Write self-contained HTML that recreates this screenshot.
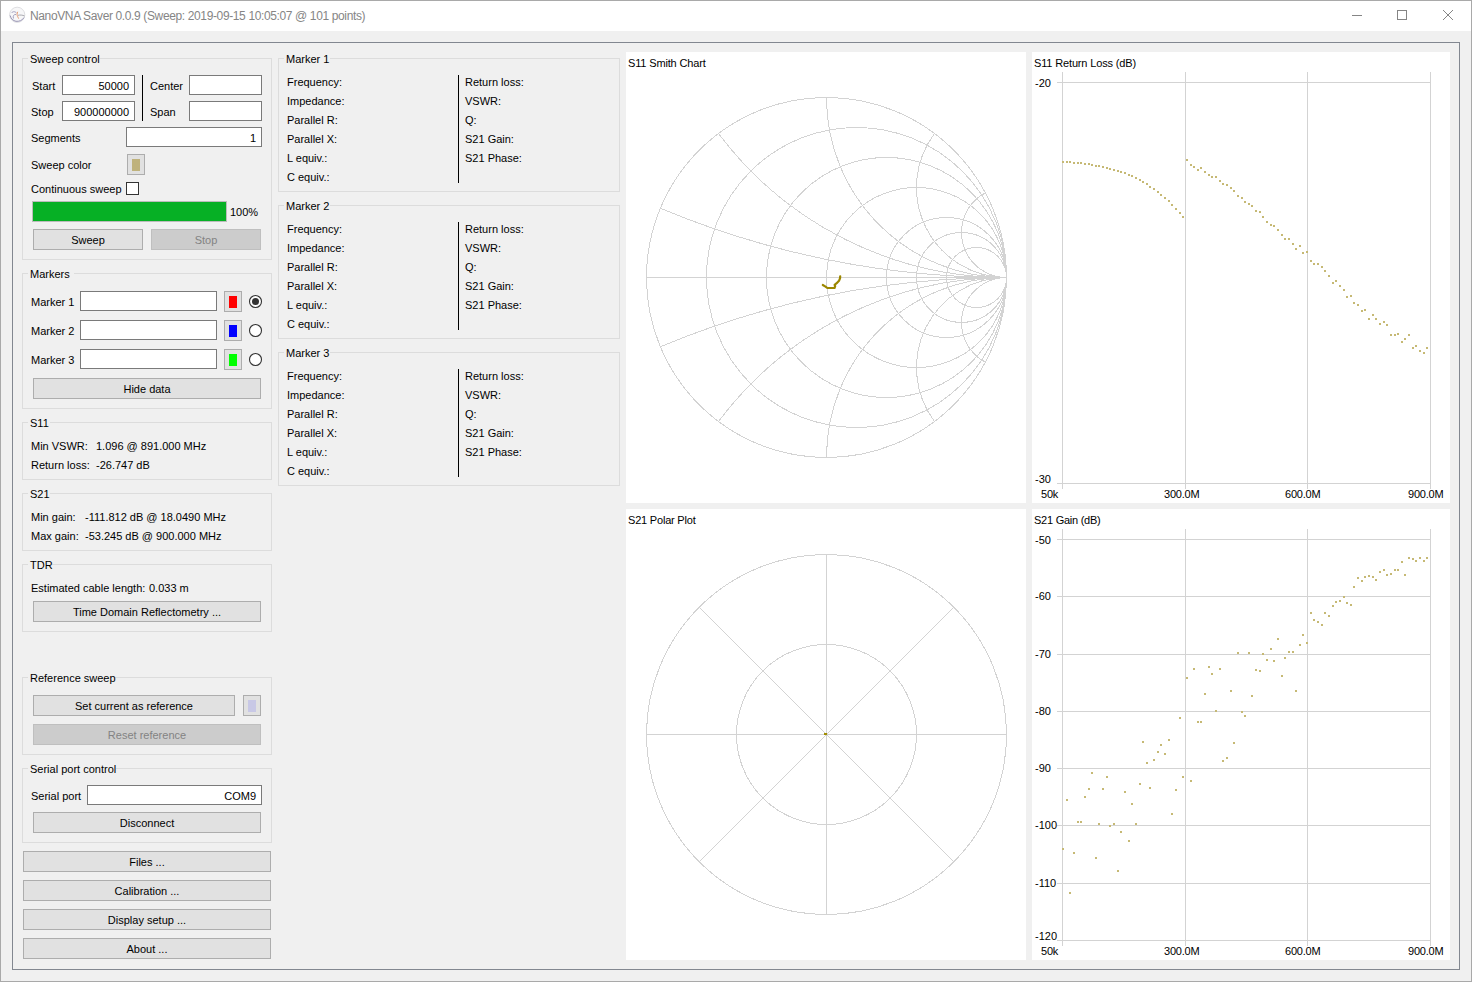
<!DOCTYPE html><html><head><meta charset="utf-8"><style>
html,body{margin:0;padding:0;}
body{width:1472px;height:982px;overflow:hidden;position:relative;background:#f0f0f0;font-family:"Liberation Sans", sans-serif;font-size:11px;}
.t{position:absolute;white-space:pre;line-height:12px;font-family:"Liberation Sans", sans-serif;}
.r{position:absolute;box-sizing:content-box;}
svg{position:absolute;}
</style></head><body>
<div class="r" style="left:0px;top:0px;width:1470px;height:980px;border:1px solid #a9a9a9;"></div>
<div class="r" style="left:1px;top:1px;width:1470px;height:30px;background:#fff;"></div>
<div class="t" style="left:30px;top:10px;color:#858585;font-size:12px;letter-spacing:-0.37px">NanoVNA Saver 0.0.9 (Sweep: 2019-09-15 10:05:07 @ 101 points)</div>
<svg style="left:6px;top:4px" width="22" height="22" viewBox="0 0 22 22">
<circle cx="17.2" cy="14.8" r="7.6" transform="translate(-6,-4)" fill="#f7f7f8" stroke="#dadade" stroke-width="0.9"/>
<g transform="translate(-6,-4)" fill="none" stroke-width="0.9">
<path d="M10.2 15.5 C10.8 18.5,13 20.8,16 21.3 C19 21.6,22.5 20.5,24 17.5" stroke="#8f8aae"/>
<path d="M11.5 13 C13 11,15.5 11.5,16.6 13.2 M13.5 18.5 C12.5 16,14 14,16 14.5" stroke="#9b97b8"/>
<path d="M18 15.3 C20 14.8,22.5 15,24.6 16" stroke="#a0a0a8"/>
<path d="M17.7 11.8 C16.8 13.5,16.9 15,17.6 16.4 C18 17.3,18.4 18,18.6 18.6" stroke="#e59a70" stroke-width="1"/>
</g>
</svg>
<div class="r" style="left:1352px;top:15px;width:10px;height:1px;background:#858585;"></div>
<div class="r" style="left:1397px;top:10px;width:8px;height:8px;border:1px solid #858585;"></div>
<svg style="left:1442px;top:9px" width="12" height="12" viewBox="0 0 12 12"><path d="M1 1 L11 11 M11 1 L1 11" stroke="#858585" stroke-width="1"/></svg>
<div class="r" style="left:12px;top:42px;width:1446px;height:926px;border:1px solid #828790;"></div>
<div class="r" style="left:22px;top:58px;width:248px;height:200px;border:1px solid #dcdcdc;"></div>
<div class="r" style="left:28px;top:52px;width:72px;height:12px;background:#f0f0f0;"></div>
<div class="t" style="left:30px;top:53px;color:#000;font-size:11px;">Sweep control</div>
<div class="t" style="left:32px;top:80px;color:#000;font-size:11px;">Start</div>
<div class="r" style="left:62px;top:75px;width:71px;height:18px;border:1px solid #7a7a7a;background:#fff;"></div>
<div class="t" style="right:1343px;top:80px;color:#000;font-size:11px">50000</div>
<div class="t" style="left:31px;top:106px;color:#000;font-size:11px;">Stop</div>
<div class="r" style="left:62px;top:101px;width:71px;height:18px;border:1px solid #7a7a7a;background:#fff;"></div>
<div class="t" style="right:1343px;top:106px;color:#000;font-size:11px">900000000</div>
<div class="r" style="left:142px;top:75px;width:1px;height:46px;background:#000;"></div>
<div class="t" style="left:150px;top:80px;color:#000;font-size:11px;">Center</div>
<div class="r" style="left:189px;top:75px;width:71px;height:18px;border:1px solid #7a7a7a;background:#fff;"></div>
<div class="t" style="left:150px;top:106px;color:#000;font-size:11px;">Span</div>
<div class="r" style="left:189px;top:101px;width:71px;height:18px;border:1px solid #7a7a7a;background:#fff;"></div>
<div class="t" style="left:31px;top:132px;color:#000;font-size:11px;">Segments</div>
<div class="r" style="left:126px;top:127px;width:134px;height:18px;border:1px solid #7a7a7a;background:#fff;"></div>
<div class="t" style="right:1216px;top:132px;color:#000;font-size:11px">1</div>
<div class="t" style="left:31px;top:159px;color:#000;font-size:11px;">Sweep color</div>
<div class="r" style="left:127px;top:154px;width:16px;height:19px;border:1px solid #adadad;background:#e1e1e1;"></div>
<div class="r" style="left:132px;top:159px;width:8px;height:12px;background:#bfb27c;"></div>
<div class="t" style="left:31px;top:183px;color:#000;font-size:11px;">Continuous sweep</div>
<div class="r" style="left:126px;top:182px;width:11px;height:11px;border:1px solid #333333;background:#fff;"></div>
<div class="r" style="left:32px;top:201px;width:193px;height:19px;border:1px solid #bcbcbc;background:#06b025;"></div>
<div class="t" style="left:230px;top:206px;color:#000;font-size:11px;">100%</div>
<div class="r" style="left:33px;top:229px;width:108px;height:19px;border:1px solid #adadad;background:#e1e1e1;"></div>
<div class="t" style="left:33px;width:110px;text-align:center;top:234px;color:#000;font-size:11px">Sweep</div>
<div class="r" style="left:151px;top:229px;width:108px;height:19px;border:1px solid #bfbfbf;background:#cccccc;"></div>
<div class="t" style="left:151px;width:110px;text-align:center;top:234px;color:#838383;font-size:11px">Stop</div>
<div class="r" style="left:22px;top:273px;width:248px;height:134px;border:1px solid #dcdcdc;"></div>
<div class="r" style="left:28px;top:267px;width:46px;height:12px;background:#f0f0f0;"></div>
<div class="t" style="left:30px;top:268px;color:#000;font-size:11px;">Markers</div>
<div class="t" style="left:31px;top:296px;color:#000;font-size:11px;">Marker 1</div>
<div class="r" style="left:80px;top:291px;width:135px;height:18px;border:1px solid #7a7a7a;background:#fff;"></div>
<div class="r" style="left:224px;top:291px;width:16px;height:19px;border:1px solid #adadad;background:#e1e1e1;"></div>
<div class="r" style="left:229px;top:296px;width:8px;height:12px;background:#ff0000;"></div>
<svg style="left:248px;top:294px" width="15" height="15" viewBox="0 0 15 15"><circle cx="7.5" cy="7.5" r="6" fill="#fff" stroke="#333" stroke-width="1.1"/><circle cx="7.5" cy="7.5" r="3.5" fill="#333"/></svg>
<div class="t" style="left:31px;top:325px;color:#000;font-size:11px;">Marker 2</div>
<div class="r" style="left:80px;top:320px;width:135px;height:18px;border:1px solid #7a7a7a;background:#fff;"></div>
<div class="r" style="left:224px;top:320px;width:16px;height:19px;border:1px solid #adadad;background:#e1e1e1;"></div>
<div class="r" style="left:229px;top:325px;width:8px;height:12px;background:#0000ff;"></div>
<svg style="left:248px;top:323px" width="15" height="15" viewBox="0 0 15 15"><circle cx="7.5" cy="7.5" r="6" fill="#fff" stroke="#333" stroke-width="1.1"/></svg>
<div class="t" style="left:31px;top:354px;color:#000;font-size:11px;">Marker 3</div>
<div class="r" style="left:80px;top:349px;width:135px;height:18px;border:1px solid #7a7a7a;background:#fff;"></div>
<div class="r" style="left:224px;top:349px;width:16px;height:19px;border:1px solid #adadad;background:#e1e1e1;"></div>
<div class="r" style="left:229px;top:354px;width:8px;height:12px;background:#00ff00;"></div>
<svg style="left:248px;top:352px" width="15" height="15" viewBox="0 0 15 15"><circle cx="7.5" cy="7.5" r="6" fill="#fff" stroke="#333" stroke-width="1.1"/></svg>
<div class="r" style="left:33px;top:378px;width:226px;height:19px;border:1px solid #adadad;background:#e1e1e1;"></div>
<div class="t" style="left:33px;width:228px;text-align:center;top:383px;color:#000;font-size:11px">Hide data</div>
<div class="r" style="left:22px;top:422px;width:248px;height:56px;border:1px solid #dcdcdc;"></div>
<div class="r" style="left:28px;top:416px;width:22px;height:12px;background:#f0f0f0;"></div>
<div class="t" style="left:30px;top:417px;color:#000;font-size:11px;">S11</div>
<div class="t" style="left:31px;top:440px;color:#000;font-size:11px;">Min VSWR:</div>
<div class="t" style="left:96px;top:440px;color:#000;font-size:11px;">1.096 @ 891.000 MHz</div>
<div class="t" style="left:31px;top:459px;color:#000;font-size:11px;">Return loss:</div>
<div class="t" style="left:96px;top:459px;color:#000;font-size:11px;">-26.747 dB</div>
<div class="r" style="left:22px;top:493px;width:248px;height:56px;border:1px solid #dcdcdc;"></div>
<div class="r" style="left:28px;top:487px;width:22px;height:12px;background:#f0f0f0;"></div>
<div class="t" style="left:30px;top:488px;color:#000;font-size:11px;">S21</div>
<div class="t" style="left:31px;top:511px;color:#000;font-size:11px;">Min gain:</div>
<div class="t" style="left:85px;top:511px;color:#000;font-size:11px;">-111.812 dB @ 18.0490 MHz</div>
<div class="t" style="left:31px;top:530px;color:#000;font-size:11px;">Max gain:</div>
<div class="t" style="left:85px;top:530px;color:#000;font-size:11px;">-53.245 dB @ 900.000 MHz</div>
<div class="r" style="left:22px;top:564px;width:248px;height:66px;border:1px solid #dcdcdc;"></div>
<div class="r" style="left:28px;top:558px;width:24px;height:12px;background:#f0f0f0;"></div>
<div class="t" style="left:30px;top:559px;color:#000;font-size:11px;">TDR</div>
<div class="t" style="left:31px;top:582px;color:#000;font-size:11px;">Estimated cable length:</div>
<div class="t" style="left:149px;top:582px;color:#000;font-size:11px;">0.033 m</div>
<div class="r" style="left:33px;top:601px;width:226px;height:19px;border:1px solid #adadad;background:#e1e1e1;"></div>
<div class="t" style="left:33px;width:228px;text-align:center;top:606px;color:#000;font-size:11px">Time Domain Reflectometry ...</div>
<div class="r" style="left:22px;top:677px;width:248px;height:76px;border:1px solid #dcdcdc;"></div>
<div class="r" style="left:28px;top:671px;width:86px;height:12px;background:#f0f0f0;"></div>
<div class="t" style="left:30px;top:672px;color:#000;font-size:11px;">Reference sweep</div>
<div class="r" style="left:33px;top:695px;width:200px;height:19px;border:1px solid #adadad;background:#e1e1e1;"></div>
<div class="t" style="left:33px;width:202px;text-align:center;top:700px;color:#000;font-size:11px">Set current as reference</div>
<div class="r" style="left:243px;top:695px;width:16px;height:19px;border:1px solid #adadad;background:#e1e1e1;"></div>
<div class="r" style="left:248px;top:700px;width:8px;height:12px;background:#c8c8e6;"></div>
<div class="r" style="left:33px;top:724px;width:226px;height:19px;border:1px solid #bfbfbf;background:#cccccc;"></div>
<div class="t" style="left:33px;width:228px;text-align:center;top:729px;color:#838383;font-size:11px">Reset reference</div>
<div class="r" style="left:22px;top:768px;width:248px;height:73px;border:1px solid #dcdcdc;"></div>
<div class="r" style="left:28px;top:762px;width:88px;height:12px;background:#f0f0f0;"></div>
<div class="t" style="left:30px;top:763px;color:#000;font-size:11px;">Serial port control</div>
<div class="t" style="left:31px;top:790px;color:#000;font-size:11px;">Serial port</div>
<div class="r" style="left:87px;top:785px;width:173px;height:18px;border:1px solid #7a7a7a;background:#fff;"></div>
<div class="t" style="right:1216px;top:790px;color:#000;font-size:11px">COM9</div>
<div class="r" style="left:33px;top:812px;width:226px;height:19px;border:1px solid #adadad;background:#e1e1e1;"></div>
<div class="t" style="left:33px;width:228px;text-align:center;top:817px;color:#000;font-size:11px">Disconnect</div>
<div class="r" style="left:23px;top:851px;width:246px;height:19px;border:1px solid #adadad;background:#e1e1e1;"></div>
<div class="t" style="left:23px;width:248px;text-align:center;top:856px;color:#000;font-size:11px">Files ...</div>
<div class="r" style="left:23px;top:880px;width:246px;height:19px;border:1px solid #adadad;background:#e1e1e1;"></div>
<div class="t" style="left:23px;width:248px;text-align:center;top:885px;color:#000;font-size:11px">Calibration ...</div>
<div class="r" style="left:23px;top:909px;width:246px;height:19px;border:1px solid #adadad;background:#e1e1e1;"></div>
<div class="t" style="left:23px;width:248px;text-align:center;top:914px;color:#000;font-size:11px">Display setup ...</div>
<div class="r" style="left:23px;top:938px;width:246px;height:19px;border:1px solid #adadad;background:#e1e1e1;"></div>
<div class="t" style="left:23px;width:248px;text-align:center;top:943px;color:#000;font-size:11px">About ...</div>
<div class="r" style="left:278px;top:58px;width:340px;height:132px;border:1px solid #dcdcdc;"></div>
<div class="r" style="left:284px;top:52px;width:46px;height:12px;background:#f0f0f0;"></div>
<div class="t" style="left:286px;top:53px;color:#000;font-size:11px;">Marker 1</div>
<div class="t" style="left:287px;top:76px;color:#000;font-size:11px;">Frequency:</div>
<div class="t" style="left:287px;top:95px;color:#000;font-size:11px;">Impedance:</div>
<div class="t" style="left:287px;top:114px;color:#000;font-size:11px;">Parallel R:</div>
<div class="t" style="left:287px;top:133px;color:#000;font-size:11px;">Parallel X:</div>
<div class="t" style="left:287px;top:152px;color:#000;font-size:11px;">L equiv.:</div>
<div class="t" style="left:287px;top:171px;color:#000;font-size:11px;">C equiv.:</div>
<div class="t" style="left:465px;top:76px;color:#000;font-size:11px;">Return loss:</div>
<div class="t" style="left:465px;top:95px;color:#000;font-size:11px;">VSWR:</div>
<div class="t" style="left:465px;top:114px;color:#000;font-size:11px;">Q:</div>
<div class="t" style="left:465px;top:133px;color:#000;font-size:11px;">S21 Gain:</div>
<div class="t" style="left:465px;top:152px;color:#000;font-size:11px;">S21 Phase:</div>
<div class="r" style="left:458px;top:75px;width:1px;height:108px;background:#000;"></div>
<div class="r" style="left:278px;top:205px;width:340px;height:132px;border:1px solid #dcdcdc;"></div>
<div class="r" style="left:284px;top:199px;width:46px;height:12px;background:#f0f0f0;"></div>
<div class="t" style="left:286px;top:200px;color:#000;font-size:11px;">Marker 2</div>
<div class="t" style="left:287px;top:223px;color:#000;font-size:11px;">Frequency:</div>
<div class="t" style="left:287px;top:242px;color:#000;font-size:11px;">Impedance:</div>
<div class="t" style="left:287px;top:261px;color:#000;font-size:11px;">Parallel R:</div>
<div class="t" style="left:287px;top:280px;color:#000;font-size:11px;">Parallel X:</div>
<div class="t" style="left:287px;top:299px;color:#000;font-size:11px;">L equiv.:</div>
<div class="t" style="left:287px;top:318px;color:#000;font-size:11px;">C equiv.:</div>
<div class="t" style="left:465px;top:223px;color:#000;font-size:11px;">Return loss:</div>
<div class="t" style="left:465px;top:242px;color:#000;font-size:11px;">VSWR:</div>
<div class="t" style="left:465px;top:261px;color:#000;font-size:11px;">Q:</div>
<div class="t" style="left:465px;top:280px;color:#000;font-size:11px;">S21 Gain:</div>
<div class="t" style="left:465px;top:299px;color:#000;font-size:11px;">S21 Phase:</div>
<div class="r" style="left:458px;top:222px;width:1px;height:108px;background:#000;"></div>
<div class="r" style="left:278px;top:352px;width:340px;height:132px;border:1px solid #dcdcdc;"></div>
<div class="r" style="left:284px;top:346px;width:46px;height:12px;background:#f0f0f0;"></div>
<div class="t" style="left:286px;top:347px;color:#000;font-size:11px;">Marker 3</div>
<div class="t" style="left:287px;top:370px;color:#000;font-size:11px;">Frequency:</div>
<div class="t" style="left:287px;top:389px;color:#000;font-size:11px;">Impedance:</div>
<div class="t" style="left:287px;top:408px;color:#000;font-size:11px;">Parallel R:</div>
<div class="t" style="left:287px;top:427px;color:#000;font-size:11px;">Parallel X:</div>
<div class="t" style="left:287px;top:446px;color:#000;font-size:11px;">L equiv.:</div>
<div class="t" style="left:287px;top:465px;color:#000;font-size:11px;">C equiv.:</div>
<div class="t" style="left:465px;top:370px;color:#000;font-size:11px;">Return loss:</div>
<div class="t" style="left:465px;top:389px;color:#000;font-size:11px;">VSWR:</div>
<div class="t" style="left:465px;top:408px;color:#000;font-size:11px;">Q:</div>
<div class="t" style="left:465px;top:427px;color:#000;font-size:11px;">S21 Gain:</div>
<div class="t" style="left:465px;top:446px;color:#000;font-size:11px;">S21 Phase:</div>
<div class="r" style="left:458px;top:369px;width:1px;height:108px;background:#000;"></div>
<div class="r" style="left:626px;top:52px;width:400px;height:451px;background:#fff;"></div>
<div class="r" style="left:1032px;top:52px;width:418px;height:451px;background:#fff;"></div>
<div class="r" style="left:626px;top:509px;width:400px;height:451px;background:#fff;"></div>
<div class="r" style="left:1032px;top:509px;width:418px;height:451px;background:#fff;"></div>
<div class="t" style="left:628px;top:57px;color:#000;font-size:11px;letter-spacing:-0.15px;">S11 Smith Chart</div>
<div class="t" style="left:1034px;top:57px;color:#000;font-size:11px;letter-spacing:-0.15px;">S11 Return Loss (dB)</div>
<div class="t" style="left:628px;top:514px;color:#000;font-size:11px;letter-spacing:-0.2px;">S21 Polar Plot</div>
<div class="t" style="left:1034px;top:514px;color:#000;font-size:11px;letter-spacing:-0.25px;">S21 Gain (dB)</div>
<svg style="left:0;top:0" width="1472" height="982"><g fill="none" stroke="#d3d3d3" stroke-width="1" shape-rendering="crispEdges"><circle cx="826.5" cy="277.5" r="180"/><line x1="646.5" y1="277.5" x2="1006.5" y2="277.5"/><circle cx="856.50" cy="277.5" r="150.00"/><circle cx="886.50" cy="277.5" r="120.00"/><circle cx="916.50" cy="277.5" r="90.00"/><circle cx="946.50" cy="277.5" r="60.00"/><circle cx="961.50" cy="277.5" r="45.00"/><circle cx="976.50" cy="277.5" r="30.00"/><path d="M1006.5 277.5 A900.00 900.00 0 0 1 660.35 208.27"/><path d="M1006.5 277.5 A900.00 900.00 0 0 0 660.35 346.73"/><path d="M1006.5 277.5 A360.00 360.00 0 0 1 718.50 133.50"/><path d="M1006.5 277.5 A360.00 360.00 0 0 0 718.50 421.50"/><path d="M1006.5 277.5 A180.00 180.00 0 0 1 826.50 97.50"/><path d="M1006.5 277.5 A180.00 180.00 0 0 0 826.50 457.50"/><path d="M1006.5 277.5 A90.00 90.00 0 0 1 934.50 133.50"/><path d="M1006.5 277.5 A90.00 90.00 0 0 0 934.50 421.50"/><path d="M1006.5 277.5 A45.00 45.00 0 0 1 985.32 192.79"/><path d="M1006.5 277.5 A45.00 45.00 0 0 0 985.32 362.21"/></g><path d="M822.8 285 L825.5 286.6 L827.3 288 L834.5 288 L835.2 286.2 L834.6 284.8 L836.7 283.2 L839 280.8 L840 278.3 L840.2 276.4" fill="none" stroke="#9c8700" stroke-width="2.2" stroke-linejoin="round" stroke-linecap="round"/><g fill="none" stroke="#d3d3d3" stroke-width="1" shape-rendering="crispEdges"><circle cx="826.5" cy="734.5" r="180"/><circle cx="826.5" cy="734.5" r="90"/><line x1="646.5" y1="734.5" x2="1006.5" y2="734.5"/><line x1="826.5" y1="554.5" x2="826.5" y2="914.5"/><line x1="699.22" y1="607.22" x2="953.78" y2="861.78"/><line x1="699.22" y1="861.78" x2="953.78" y2="607.22"/></g><rect x="824" y="733" width="3" height="2" fill="#a08c00"/><g fill="#d3d3d3" shape-rendering="crispEdges"><rect x="1062" y="72" width="1" height="417"/><rect x="1185" y="72" width="1" height="417"/><rect x="1307" y="72" width="1" height="417"/><rect x="1430" y="72" width="1" height="417"/><rect x="1057" y="82" width="374" height="1"/><rect x="1057" y="483" width="374" height="1"/><rect x="1062" y="529" width="1" height="417"/><rect x="1185" y="529" width="1" height="417"/><rect x="1307" y="529" width="1" height="417"/><rect x="1430" y="529" width="1" height="417"/><rect x="1057" y="539" width="374" height="1"/><rect x="1057" y="596" width="374" height="1"/><rect x="1057" y="654" width="374" height="1"/><rect x="1057" y="711" width="374" height="1"/><rect x="1057" y="768" width="374" height="1"/><rect x="1057" y="825" width="374" height="1"/><rect x="1057" y="883" width="374" height="1"/><rect x="1057" y="940" width="374" height="1"/></g><g fill="#c6b975" shape-rendering="crispEdges"><rect x="1062" y="161" width="2" height="2"/><rect x="1062" y="848" width="2" height="2"/><rect x="1066" y="161" width="2" height="2"/><rect x="1066" y="799" width="2" height="2"/><rect x="1069" y="161" width="2" height="2"/><rect x="1069" y="892" width="2" height="2"/><rect x="1073" y="162" width="2" height="2"/><rect x="1073" y="852" width="2" height="2"/><rect x="1077" y="162" width="2" height="2"/><rect x="1077" y="821" width="2" height="2"/><rect x="1080" y="162" width="2" height="2"/><rect x="1080" y="821" width="2" height="2"/><rect x="1084" y="163" width="2" height="2"/><rect x="1084" y="796" width="2" height="2"/><rect x="1088" y="163" width="2" height="2"/><rect x="1088" y="788" width="2" height="2"/><rect x="1091" y="164" width="2" height="2"/><rect x="1091" y="772" width="2" height="2"/><rect x="1095" y="165" width="2" height="2"/><rect x="1095" y="857" width="2" height="2"/><rect x="1098" y="165" width="2" height="2"/><rect x="1098" y="823" width="2" height="2"/><rect x="1102" y="166" width="2" height="2"/><rect x="1102" y="788" width="2" height="2"/><rect x="1106" y="167" width="2" height="2"/><rect x="1106" y="776" width="2" height="2"/><rect x="1109" y="168" width="2" height="2"/><rect x="1109" y="825" width="2" height="2"/><rect x="1113" y="169" width="2" height="2"/><rect x="1113" y="823" width="2" height="2"/><rect x="1117" y="170" width="2" height="2"/><rect x="1117" y="870" width="2" height="2"/><rect x="1120" y="171" width="2" height="2"/><rect x="1120" y="831" width="2" height="2"/><rect x="1124" y="172" width="2" height="2"/><rect x="1124" y="791" width="2" height="2"/><rect x="1128" y="174" width="2" height="2"/><rect x="1128" y="840" width="2" height="2"/><rect x="1131" y="175" width="2" height="2"/><rect x="1131" y="803" width="2" height="2"/><rect x="1135" y="177" width="2" height="2"/><rect x="1135" y="823" width="2" height="2"/><rect x="1139" y="179" width="2" height="2"/><rect x="1139" y="783" width="2" height="2"/><rect x="1142" y="181" width="2" height="2"/><rect x="1142" y="741" width="2" height="2"/><rect x="1146" y="183" width="2" height="2"/><rect x="1146" y="762" width="2" height="2"/><rect x="1149" y="186" width="2" height="2"/><rect x="1149" y="787" width="2" height="2"/><rect x="1153" y="188" width="2" height="2"/><rect x="1153" y="759" width="2" height="2"/><rect x="1157" y="191" width="2" height="2"/><rect x="1157" y="751" width="2" height="2"/><rect x="1160" y="194" width="2" height="2"/><rect x="1160" y="744" width="2" height="2"/><rect x="1164" y="197" width="2" height="2"/><rect x="1164" y="753" width="2" height="2"/><rect x="1168" y="200" width="2" height="2"/><rect x="1168" y="739" width="2" height="2"/><rect x="1171" y="204" width="2" height="2"/><rect x="1171" y="813" width="2" height="2"/><rect x="1175" y="208" width="2" height="2"/><rect x="1175" y="789" width="2" height="2"/><rect x="1179" y="212" width="2" height="2"/><rect x="1179" y="717" width="2" height="2"/><rect x="1182" y="216" width="2" height="2"/><rect x="1182" y="776" width="2" height="2"/><rect x="1186" y="159" width="2" height="2"/><rect x="1186" y="677" width="2" height="2"/><rect x="1190" y="164" width="2" height="2"/><rect x="1190" y="780" width="2" height="2"/><rect x="1193" y="166" width="2" height="2"/><rect x="1193" y="668" width="2" height="2"/><rect x="1197" y="169" width="2" height="2"/><rect x="1197" y="721" width="2" height="2"/><rect x="1200" y="167" width="2" height="2"/><rect x="1200" y="721" width="2" height="2"/><rect x="1204" y="171" width="2" height="2"/><rect x="1204" y="693" width="2" height="2"/><rect x="1208" y="174" width="2" height="2"/><rect x="1208" y="666" width="2" height="2"/><rect x="1211" y="176" width="2" height="2"/><rect x="1211" y="673" width="2" height="2"/><rect x="1215" y="176" width="2" height="2"/><rect x="1215" y="710" width="2" height="2"/><rect x="1219" y="180" width="2" height="2"/><rect x="1219" y="668" width="2" height="2"/><rect x="1222" y="183" width="2" height="2"/><rect x="1222" y="760" width="2" height="2"/><rect x="1226" y="184" width="2" height="2"/><rect x="1226" y="757" width="2" height="2"/><rect x="1230" y="187" width="2" height="2"/><rect x="1230" y="690" width="2" height="2"/><rect x="1233" y="190" width="2" height="2"/><rect x="1233" y="742" width="2" height="2"/><rect x="1237" y="195" width="2" height="2"/><rect x="1237" y="652" width="2" height="2"/><rect x="1241" y="197" width="2" height="2"/><rect x="1241" y="711" width="2" height="2"/><rect x="1244" y="201" width="2" height="2"/><rect x="1244" y="715" width="2" height="2"/><rect x="1248" y="203" width="2" height="2"/><rect x="1248" y="652" width="2" height="2"/><rect x="1251" y="205" width="2" height="2"/><rect x="1251" y="695" width="2" height="2"/><rect x="1255" y="210" width="2" height="2"/><rect x="1255" y="669" width="2" height="2"/><rect x="1259" y="211" width="2" height="2"/><rect x="1259" y="670" width="2" height="2"/><rect x="1262" y="216" width="2" height="2"/><rect x="1262" y="653" width="2" height="2"/><rect x="1266" y="221" width="2" height="2"/><rect x="1266" y="659" width="2" height="2"/><rect x="1270" y="224" width="2" height="2"/><rect x="1270" y="648" width="2" height="2"/><rect x="1273" y="225" width="2" height="2"/><rect x="1273" y="660" width="2" height="2"/><rect x="1277" y="229" width="2" height="2"/><rect x="1277" y="638" width="2" height="2"/><rect x="1281" y="234" width="2" height="2"/><rect x="1281" y="675" width="2" height="2"/><rect x="1284" y="238" width="2" height="2"/><rect x="1284" y="657" width="2" height="2"/><rect x="1288" y="238" width="2" height="2"/><rect x="1288" y="651" width="2" height="2"/><rect x="1292" y="243" width="2" height="2"/><rect x="1292" y="651" width="2" height="2"/><rect x="1295" y="248" width="2" height="2"/><rect x="1295" y="690" width="2" height="2"/><rect x="1299" y="245" width="2" height="2"/><rect x="1299" y="644" width="2" height="2"/><rect x="1302" y="252" width="2" height="2"/><rect x="1302" y="634" width="2" height="2"/><rect x="1306" y="251" width="2" height="2"/><rect x="1306" y="642" width="2" height="2"/><rect x="1310" y="260" width="2" height="2"/><rect x="1310" y="612" width="2" height="2"/><rect x="1313" y="263" width="2" height="2"/><rect x="1313" y="619" width="2" height="2"/><rect x="1317" y="263" width="2" height="2"/><rect x="1317" y="621" width="2" height="2"/><rect x="1321" y="266" width="2" height="2"/><rect x="1321" y="624" width="2" height="2"/><rect x="1324" y="270" width="2" height="2"/><rect x="1324" y="612" width="2" height="2"/><rect x="1328" y="275" width="2" height="2"/><rect x="1328" y="615" width="2" height="2"/><rect x="1332" y="282" width="2" height="2"/><rect x="1332" y="605" width="2" height="2"/><rect x="1335" y="280" width="2" height="2"/><rect x="1335" y="601" width="2" height="2"/><rect x="1339" y="285" width="2" height="2"/><rect x="1339" y="600" width="2" height="2"/><rect x="1343" y="289" width="2" height="2"/><rect x="1343" y="596" width="2" height="2"/><rect x="1346" y="296" width="2" height="2"/><rect x="1346" y="602" width="2" height="2"/><rect x="1350" y="295" width="2" height="2"/><rect x="1350" y="604" width="2" height="2"/><rect x="1353" y="302" width="2" height="2"/><rect x="1353" y="586" width="2" height="2"/><rect x="1357" y="304" width="2" height="2"/><rect x="1357" y="577" width="2" height="2"/><rect x="1361" y="310" width="2" height="2"/><rect x="1361" y="580" width="2" height="2"/><rect x="1364" y="309" width="2" height="2"/><rect x="1364" y="576" width="2" height="2"/><rect x="1368" y="318" width="2" height="2"/><rect x="1368" y="575" width="2" height="2"/><rect x="1372" y="314" width="2" height="2"/><rect x="1372" y="576" width="2" height="2"/><rect x="1375" y="318" width="2" height="2"/><rect x="1375" y="579" width="2" height="2"/><rect x="1379" y="323" width="2" height="2"/><rect x="1379" y="571" width="2" height="2"/><rect x="1383" y="321" width="2" height="2"/><rect x="1383" y="569" width="2" height="2"/><rect x="1386" y="324" width="2" height="2"/><rect x="1386" y="574" width="2" height="2"/><rect x="1390" y="334" width="2" height="2"/><rect x="1390" y="573" width="2" height="2"/><rect x="1394" y="334" width="2" height="2"/><rect x="1394" y="569" width="2" height="2"/><rect x="1397" y="333" width="2" height="2"/><rect x="1397" y="569" width="2" height="2"/><rect x="1401" y="341" width="2" height="2"/><rect x="1401" y="561" width="2" height="2"/><rect x="1404" y="338" width="2" height="2"/><rect x="1404" y="574" width="2" height="2"/><rect x="1408" y="334" width="2" height="2"/><rect x="1408" y="557" width="2" height="2"/><rect x="1412" y="347" width="2" height="2"/><rect x="1412" y="558" width="2" height="2"/><rect x="1415" y="345" width="2" height="2"/><rect x="1415" y="560" width="2" height="2"/><rect x="1419" y="350" width="2" height="2"/><rect x="1419" y="557" width="2" height="2"/><rect x="1423" y="352" width="2" height="2"/><rect x="1423" y="560" width="2" height="2"/><rect x="1426" y="347" width="2" height="2"/><rect x="1426" y="557" width="2" height="2"/></g></svg>
<div class="t" style="left:1035px;top:77px;color:#000;font-size:11px;">-20</div>
<div class="t" style="left:1035px;top:473px;color:#000;font-size:11px;">-30</div>
<div class="t" style="left:1035px;top:534px;color:#000;font-size:11px;">-50</div>
<div class="t" style="left:1035px;top:590px;color:#000;font-size:11px;">-60</div>
<div class="t" style="left:1035px;top:648px;color:#000;font-size:11px;">-70</div>
<div class="t" style="left:1035px;top:705px;color:#000;font-size:11px;">-80</div>
<div class="t" style="left:1035px;top:762px;color:#000;font-size:11px;">-90</div>
<div class="t" style="left:1035px;top:819px;color:#000;font-size:11px;">-100</div>
<div class="t" style="left:1035px;top:877px;color:#000;font-size:11px;">-110</div>
<div class="t" style="left:1035px;top:930px;color:#000;font-size:11px;">-120</div>
<div class="t" style="left:1041px;top:488px;color:#000;font-size:11px;letter-spacing:-0.2px;">50k</div>
<div class="t" style="left:1164px;top:488px;color:#000;font-size:11px;letter-spacing:-0.2px;">300.0M</div>
<div class="t" style="left:1285px;top:488px;color:#000;font-size:11px;letter-spacing:-0.2px;">600.0M</div>
<div class="t" style="left:1408px;top:488px;color:#000;font-size:11px;letter-spacing:-0.2px;">900.0M</div>
<div class="t" style="left:1041px;top:945px;color:#000;font-size:11px;letter-spacing:-0.2px;">50k</div>
<div class="t" style="left:1164px;top:945px;color:#000;font-size:11px;letter-spacing:-0.2px;">300.0M</div>
<div class="t" style="left:1285px;top:945px;color:#000;font-size:11px;letter-spacing:-0.2px;">600.0M</div>
<div class="t" style="left:1408px;top:945px;color:#000;font-size:11px;letter-spacing:-0.2px;">900.0M</div>
</body></html>
